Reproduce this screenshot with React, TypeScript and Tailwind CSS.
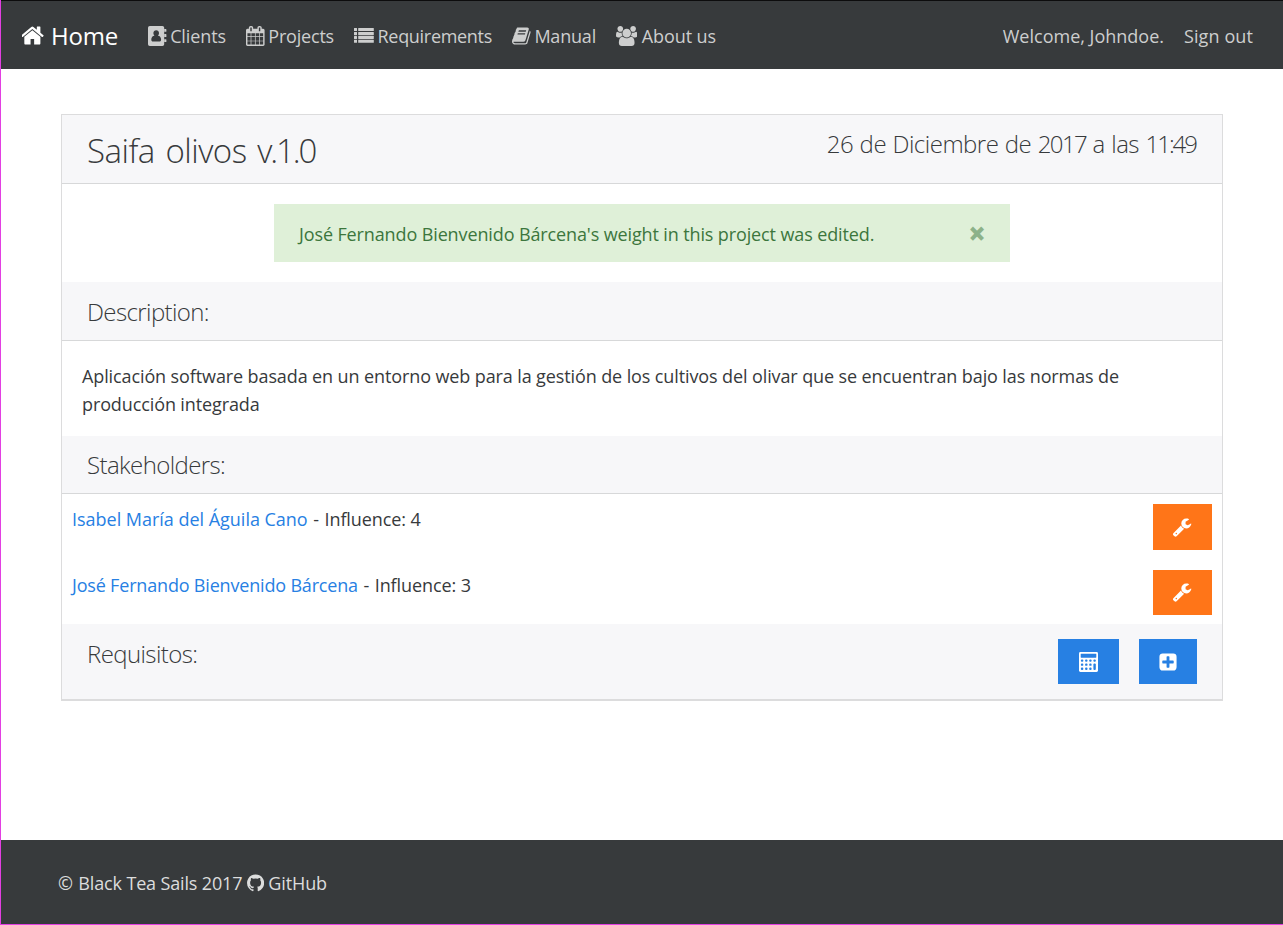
import type { ReactNode } from "react";

const glyphs = {
  home: "M1408 992v480q0 26-19 45t-45 19h-384v-384h-256v384h-384q-26 0-45-19t-19-45v-480q0-1 .5-3t.5-3l575-474 575 474q1 2 1 6zm223-69l-62 74q-8 9-21 11h-3q-13 0-21-7l-692-577-692 577q-12 8-24 7-13-2-21-11l-62-74q-8-10-7-23.5t11-21.5l719-599q32-26 76-26t76 26l244 204v-195q0-14 9-23t23-9h192q14 0 23 9t9 23v408l219 182q10 8 11 21.5t-7 23.5z",
  calendar:
    "M192 1664h288v-288h-288v288zm352 0h320v-288h-320v288zm-352-352h288v-320h-288v320zm352 0h320v-320h-320v320zm-352-384h288v-288h-288v288zm736 736h320v-288h-320v288zm-384-736h320v-288h-320v288zm768 736h288v-288h-288v288zm-384-352h320v-320h-320v320zm-352-864v-288q0-13-9.5-22.5t-22.5-9.5h-64q-13 0-22.5 9.5t-9.5 22.5v288q0 13 9.5 22.5t22.5 9.5h64q13 0 22.5-9.5t9.5-22.5zm736 864h288v-320h-288v320zm-384-384h320v-288h-320v288zm384 0h288v-288h-288v288zm32-480v-288q0-13-9.5-22.5t-22.5-9.5h-64q-13 0-22.5 9.5t-9.5 22.5v288q0 13 9.5 22.5t22.5 9.5h64q13 0 22.5-9.5t9.5-22.5zm384-64v1280q0 52-38 90t-90 38h-1408q-52 0-90-38t-38-90v-1280q0-52 38-90t90-38h128v-96q0-66 47-113t113-47h64q66 0 113 47t47 113v96h384v-96q0-66 47-113t113-47h64q66 0 113 47t47 113v96h128q52 0 90 38t38 90z",
  book: "M1703 478q40 57 18 129l-275 906q-19 64-76.5 107.5t-122.5 43.5h-923q-77 0-148.5-53.5t-99.5-131.5q-24-67-2-127 0-4 3-27t4-37q1-8-3-21.5t-3-19.5q2-11 8-21t16.5-23.5 16.5-23.5q23-38 45-91.5t30-91.5q3-10 .5-30t-.5-28q3-11 17-28t17-23q21-36 42-92t25-90q1-9-2.5-32t.5-28q4-13 22-30.5t22-22.5q19-26 42.5-84.5t27.5-96.5q1-8-3-25.5t-2-26.5q2-8 9-18t18-23 17-21q8-12 16.5-30.5t15-35 16-36 19.5-32 26.5-23.5 36-11.5 47.5 5.5l-1 3q38-9 51-9h761q74 0 114 56t18 130l-274 906q-36 119-71.5 153.5t-128.5 34.5h-869q-27 0-38 15-11 16-1 43 24 70 144 70h923q29 0 56-15.5t35-41.5l300-987q7-22 5-57 38 15 59 43zm-1064 2q-4 13 2 22.5t20 9.5h608q13 0 25.5-9.5t16.5-22.5l21-64q4-13-2-22.5t-20-9.5h-608q-13 0-25.5 9.5t-16.5 22.5zm-83 256q-4 13 2 22.5t20 9.5h608q13 0 25.5-9.5t16.5-22.5l21-64q4-13-2-22.5t-20-9.5h-608q-13 0-25.5 9.5t-16.5 22.5z",
  users:
    "M593 896q-162 5-265 128h-134q-82 0-138-40.5t-56-118.5q0-353 124-353 6 0 43.5 21t97.5 42.5 119 21.5q67 0 133-23-5 37-5 66 0 139 81 256zm1071 637q0 120-73 189.5t-194 69.5h-874q-121 0-194-69.5t-73-189.5q0-53 3.5-103.5t14-109 26.5-108.5 43-97.5 62-81 85.5-53.5 111.5-20q10 0 43 21.5t73 48 107 48 135 21.5 135-21.5 107-48 73-48 43-21.5q61 0 111.5 20t85.5 53.5 62 81 43 97.5 26.5 108.5 14 109 3.5 103.5zm-1024-1277q0 106-75 181t-181 75-181-75-75-181 75-181 181-75 181 75 75 181zm704 384q0 159-112.5 271.5t-271.5 112.5-271.5-112.5-112.5-271.5 112.5-271.5 271.5-112.5 271.5 112.5 112.5 271.5zm576 225q0 78-56 118.5t-138 40.5h-134q-103-123-265-128 81-117 81-256 0-29-5-66 66 23 133 23 59 0 119-21.5t97.5-42.5 43.5-21q124 0 124 353zm-128-609q0 106-75 181t-181 75-181-75-75-181 75-181 181-75 181 75 75 181z",
  wrench:
    "M448 1472q0-26-19-45t-45-19-45 19-19 45 19 45 45 19 45-19 19-45zm644-420l-682 682q-37 37-90 37-52 0-91-37l-106-108q-38-36-38-90 0-53 38-91l681-681q39 98 114.5 173.5t173.5 114.5zm634-435q0 39-23 106-47 134-164.5 217.5t-258.5 83.5q-185 0-316.5-131.5t-131.5-316.5 131.5-316.5 316.5-131.5q58 0 121.5 16.5t107.5 46.5q16 11 16 28t-16 28l-293 169v224l193 107q5-3 79-48.5t135.5-81 70.5-35.5q15 0 23.5 10t8.5 25z",
  plus: "M1408 960v-128q0-26-19-45t-45-19h-320v-320q0-26-19-45t-45-19h-128q-26 0-45 19t-19 45v320h-320q-26 0-45 19t-19 45v128q0 26 19 45t45 19h320v320q0 26 19 45t45 19h128q26 0 45-19t19-45v-320h320q26 0 45-19t19-45zm256-544v960q0 119-84.5 203.5t-203.5 84.5h-960q-119 0-203.5-84.5t-84.5-203.5v-960q0-119 84.5-203.5t203.5-84.5h960q119 0 203.5 84.5t84.5 203.5z",
  github:
    "M896 128q209 0 385.5 103t279.5 279.5 103 385.5q0 251-146.5 451.5t-378.5 277.5q-27 5-40-7t-13-30q0-3 .5-76.5t.5-134.5q0-97-52-142 57-6 102.5-18t94-39 81-66.5 53-105 20.5-150.5q0-119-79-206 37-91-8-204-28-9-81 11t-92 44l-38 24q-93-26-192-26t-192 26q-16-11-42.5-27t-83.5-38.5-85-13.5q-45 113-8 204-79 87-79 206 0 85 20.5 150t52.5 105 80.5 67 94 39 102.5 18q-39 36-49 103-21 10-45 15t-57 5-65.5-21.5-55.5-62.5q-19-32-48.5-52t-49.5-24l-20-3q-21 0-29 4.5t-5 11.5 9 14 13 12l7 5q22 10 43.5 38t31.5 51l10 23q13 38 44 61.5t67 30 69.5 7 55.5-3.5l23-4q0 38 .5 88.5t.5 54.5q0 18-13 30t-40 7q-232-77-378.5-277.5t-146.5-451.5q0-209 103-385.5t279.5-279.5 385.5-103z",
};

function Glyph({ name, box = "0 0 1792 1792", className }: { name: keyof typeof glyphs; box?: string; className: string }) {
  return (
    <svg viewBox={box} className={`shrink-0 fill-current ${className}`} aria-hidden="true">
      <path d={glyphs[name]} />
    </svg>
  );
}

function AddressBook() {
  return (
    <svg viewBox="0 0 18.6 20" className="h-5 w-[18.6px] shrink-0 fill-current" aria-hidden="true">
      <path
        fillRule="evenodd"
        d="M1.8 0H14.4A1.8 1.8 0 0 1 16.2 1.8V18.2A1.8 1.8 0 0 1 14.4 20H1.8A1.8 1.8 0 0 1 0 18.2V1.8A1.8 1.8 0 0 1 1.8 0ZM8.2 4.2C6.5 4.2 5.4 5.5 5.4 7.1C5.4 8.2 5.8 9.2 6.5 9.8C4.3 9.8 3.3 11.6 3.3 13.8C3.3 14.8 4 15.6 4.9 15.6H11.5C12.4 15.6 13.1 14.8 13.1 13.8C13.1 11.6 12.1 9.8 9.9 9.8C10.6 9.2 11 8.2 11 7.1C11 5.5 9.9 4.2 8.2 4.2Z"
      />
      <path d="M16.2 2.9h1.7q.5 0 .5.5v1.8q0 .5-.5.5h-1.7zM16.2 8.1h1.7q.5 0 .5.5v1.8q0 .5-.5.5h-1.7zM16.2 13.3h1.7q.5 0 .5.5v1.8q0 .5-.5.5h-1.7z" />
    </svg>
  );
}

function ListIcon() {
  return (
    <svg viewBox="0 0 20 20" className="size-5 shrink-0 fill-current" aria-hidden="true">
      {[2, 5.9, 9.8, 13.7].map((y) => (
        <g key={y}>
          <rect x="0" y={y} width="3" height="3.1" rx="0.35" />
          <rect x="4.2" y={y} width="15.6" height="3.1" rx="0.35" />
        </g>
      ))}
    </svg>
  );
}

function Calculator() {
  return (
    <svg viewBox="0 0 19 20" className="h-5 w-[19px] fill-white" aria-hidden="true">
      <rect width="19" height="20" rx="1.4" />
      <g className="fill-[#2780e3]">
        <rect x="1.7" y="1.7" width="15.6" height="4" rx="0.4" />
        {[7.4, 11.5, 15.6].map((y) =>
          [1.9, 6.1, 10.2].map((x) => <rect key={`${x}-${y}`} x={x} y={y} width="2.4" height="2.3" rx="0.9" />),
        )}
        <rect x="14.4" y="7.4" width="2.4" height="2.3" rx="0.9" />
        <rect x="14.4" y="11.5" width="2.4" height="6.4" rx="0.9" />
      </g>
    </svg>
  );
}

function NavItem({ icon, width, children }: { icon: ReactNode; width: string; children: string }) {
  return (
    <a href="#" className={`flex items-center justify-between ${width}`}>
      {icon}
      <span>{children}</span>
    </a>
  );
}

function Stakeholder({ name, influence, height, tracking }: { name: string; influence: number; height: string; tracking: string }) {
  return (
    <li className="flex items-start justify-between px-2.5">
      <p className="pt-px">
        <a href="#" className={`mr-px text-[#2780e3] ${tracking}`}>
          {name}
        </a>{" "}
        - <span className="ml-px">Influence: {influence}</span>
      </p>
      <button className={`flex w-[59px] items-center justify-center bg-[#ff7518] text-white ${height}`}>
        <Glyph name="wrench" className="mr-px mb-px size-5" />
      </button>
    </li>
  );
}

const heading = "text-2xl leading-7 font-light tracking-[-0.6px]";

export default function App() {
  return (
    <div className="flex h-[925px] flex-col border-b border-l border-[#e23fe2] bg-white font-['Open_Sans',sans-serif] text-[18px] leading-7 tracking-[-0.1px] whitespace-nowrap text-[#373a3c]">
      <nav className="flex h-[69px] shrink-0 items-center justify-between border-t border-[#0c0c0d] bg-[#373a3c] pt-px pr-[30px] pl-5 text-[#cdcece]">
        <div className="flex items-center gap-5">
          <a href="#" className="mr-2.5 flex w-[97px] items-center justify-between text-2xl leading-7 tracking-[-0.2px] text-white">
            <Glyph name="home" box="90 0 1612 1792" className="ml-[0.5px] h-[25px] w-[22.5px]" />
            <span>Home</span>
          </a>
          <NavItem icon={<AddressBook />} width="w-[78px]">Clients</NavItem>
          <NavItem icon={<Glyph name="calendar" box="64 0 1664 1792" className="h-5 w-[18.6px]" />} width="w-[88px] tracking-[-0.2px]">Projects</NavItem>
          <NavItem icon={<ListIcon />} width="w-[138px] tracking-[-0.3px]">Requirements</NavItem>
          <NavItem icon={<Glyph name="book" box="64 0 1664 1792" className="h-5 w-[18.6px]" />} width="w-[84px] tracking-[-0.2px]">Manual</NavItem>
          <NavItem icon={<Glyph name="users" box="0 0 1920 1792" className="h-5 w-[21.4px]" />} width="w-[100px]">About us</NavItem>
        </div>
        <div className="flex gap-5">
          <span className="tracking-[0px]">Welcome, Johndoe.</span>
          <a href="#" className="tracking-[0.1px]">Sign out</a>
        </div>
      </nav>

      <main className="grow pt-[45px] pr-[60px] pl-[60px]">
        <section className="border border-b-2 border-[#dcdcdd]">
          <header className="flex h-[69px] items-start justify-between border-b border-[#d7d8d9] bg-[#f7f7f9] px-[25px] pt-[15px] font-light">
            <h1 className="pt-px text-[33px] leading-10 tracking-[-0.5px] [word-spacing:2.5px]">
              Saifa olivos <span className="tracking-[-2.1px]">v.1.0</span>
            </h1>
            <time className="mr-px text-2xl leading-7 tracking-[-0.5px] [word-spacing:0.7px]">
              26 de Diciembre de <span className="tracking-[-1.6px]">2017</span> a las <span className="tracking-[-2px]">11:49</span>
            </time>
          </header>

          <div className="flex h-[98px] items-start justify-center pt-5">
            <div className="flex h-[58px] w-[736px] justify-between bg-[#dff0d8] pt-4 pr-6 pl-[25px] text-[#3c763d]">
              <p className="tracking-[-0.12px]">José Fernando Bienvenido Bárcena's weight in this project was edited.</p>
              <button className="-mt-px h-7 text-[31px] leading-6 font-extrabold opacity-50">×</button>
            </div>
          </div>

          <header className="h-[59px] border-b border-[#d7d8d9] bg-[#f7f7f9] px-[25px] pt-4">
            <h2 className={heading}>Description:</h2>
          </header>
          <p className="h-[95px] px-5 pt-[21px] tracking-[-0.11px]">
            Aplicación software basada en un entorno web para la gestión de los cultivos del olivar que se encuentran bajo las normas de
            <br />
            producción integrada
          </p>

          <header className="h-[58px] border-b border-[#d7d8d9] bg-[#f7f7f9] px-[25px] pt-[15px]">
            <h2 className={heading}>Stakeholders:</h2>
          </header>
          <ul className="flex h-[130px] flex-col gap-5 pt-2.5">
            <Stakeholder name="Isabel María del Águila Cano" influence={4} height="h-[46px]" tracking="tracking-[-0.02px]" />
            <Stakeholder name="José Fernando Bienvenido Bárcena" influence={3} height="h-[45px]" tracking="tracking-[-0.18px]" />
          </ul>

          <header className="flex h-[75px] items-start justify-between bg-[#f7f7f9] px-[25px] pt-[15px]">
            <h2 className={`pt-px ${heading}`}>Requisitos:</h2>
            <div className="flex gap-5">
              <button className="flex h-[45px] w-[61px] items-center justify-center bg-[#2780e3]">
                <Calculator />
              </button>
              <button className="flex h-[45px] w-[58px] items-center justify-center bg-[#2780e3] text-white">
                <Glyph name="plus" className="size-5" />
              </button>
            </div>
          </header>
        </section>
      </main>

      <footer className="flex h-[84px] shrink-0 items-start bg-[#373a3c] pt-[29px] pl-[57px] text-[#dcdddd]">
        <span className="w-[189px] tracking-[-0.15px]">
          © <span className="ml-px">Black Tea Sails 2017</span>
        </span>
        <a href="#" className="flex w-[80px] justify-between">
          <Glyph name="github" box="128 0 1536 1792" className="mt-1 h-5 w-[17.2px]" />
          <span>GitHub</span>
        </a>
      </footer>
    </div>
  );
}
